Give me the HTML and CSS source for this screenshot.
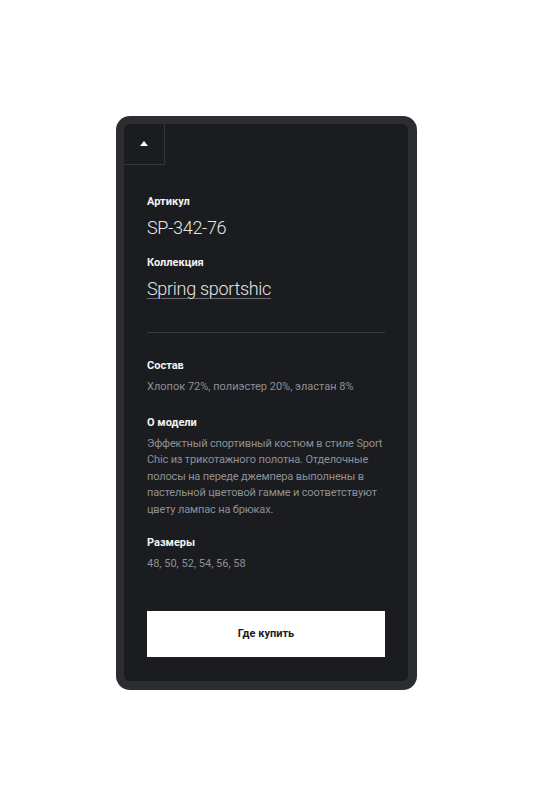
FILE: index.html
```html
<!DOCTYPE html>
<html lang="ru">
<head>
<meta charset="utf-8">
<link rel="stylesheet" href="styles.css">
</head>
<body>
<div class="device">
  <div class="screen">
    <div class="top">
      <div class="up"><span class="tri"></span></div>
    </div>
    <div class="content">
      <div class="label">Артикул</div>
      <div class="big">SP-342-76</div>
      <div class="label l2">Коллекция</div>
      <div class="big"><span class="link">Spring sportshic</span></div>
      <div class="divider"></div>
      <div class="label">Состав</div>
      <p class="text">Хлопок 72%, полиэстер 20%, эластан 8%</p>
      <div class="label l3">О модели</div>
      <p class="text desc">Эффектный спортивный костюм в стиле Sport<br>Chic из трикотажного полотна. Отделочные<br>полосы на переде джемпера выполнены в<br>пастельной цветовой гамме и соответствуют<br>цвету лампас на брюках.</p>
      <div class="label l4">Размеры</div>
      <p class="text">48, 50, 52, 54, 56, 58</p>
      <button class="buy">Где купить</button>
    </div>
  </div>
</div>
</body>
</html>
```
FILE: styles.css
```css
html, body {
  margin: 0;
  padding: 0;
  background: #ffffff;
}
body {
  font-family: Roboto, "Noto Sans", sans-serif;
}
.device {
  margin: 116px 0 0 116px;
  width: 301px;
  height: 574px;
  box-sizing: border-box;
  padding: 8px 9px 9px 8px;
  background: #2b2d30;
  border-radius: 14px;
  display: flex;
}
.screen {
  flex: 1;
  background: #1b1c1f;
  border-radius: 6px;
  display: flex;
  flex-direction: column;
}
.top {
  display: flex;
}
.up {
  width: 41px;
  height: 41px;
  border-right: 1px solid #34363a;
  border-bottom: 1px solid #34363a;
  box-sizing: border-box;
  display: flex;
  align-items: center;
  justify-content: center;
}
.tri {
  width: 0;
  height: 0;
  border-left: 4px solid transparent;
  border-right: 4px solid transparent;
  border-bottom: 5px solid #ffffff;
  margin-top: -2px;
}
.content {
  padding: 30px 23px 0 23px;
  display: flex;
  flex-direction: column;
}
.label {
  color: #f2f2f2;
  font-size: 11px;
  font-weight: 700;
  line-height: 14px;
}
.l2 { margin-top: 16px; }
.l3 { margin-top: 20px; }
.l4 { margin-top: 18px; }
.big {
  color: #e6e6e6;
  font-size: 18px;
  font-weight: 300;
  line-height: 24px;
  letter-spacing: -0.3px;
  margin-top: 7px;
}
.link {
  text-decoration: underline;
  text-decoration-color: #6b6d70;
  text-decoration-thickness: 1px;
  text-underline-offset: 3px;
}
.divider {
  height: 1px;
  background: #3a3c40;
  margin: 31px 0 26px;
}
.text {
  margin: 6px 0 0;
  color: #8e9094;
  font-size: 11px;
  line-height: 16.5px;
}
.desc {
  white-space: nowrap;
  letter-spacing: -0.15px;
}
.buy {
  margin-top: 38px;
  height: 46px;
  border: none;
  background: #ffffff;
  color: #1b1c1f;
  font-family: Roboto, "Noto Sans", sans-serif;
  font-size: 11px;
  font-weight: 700;
  padding: 0;
}
```
